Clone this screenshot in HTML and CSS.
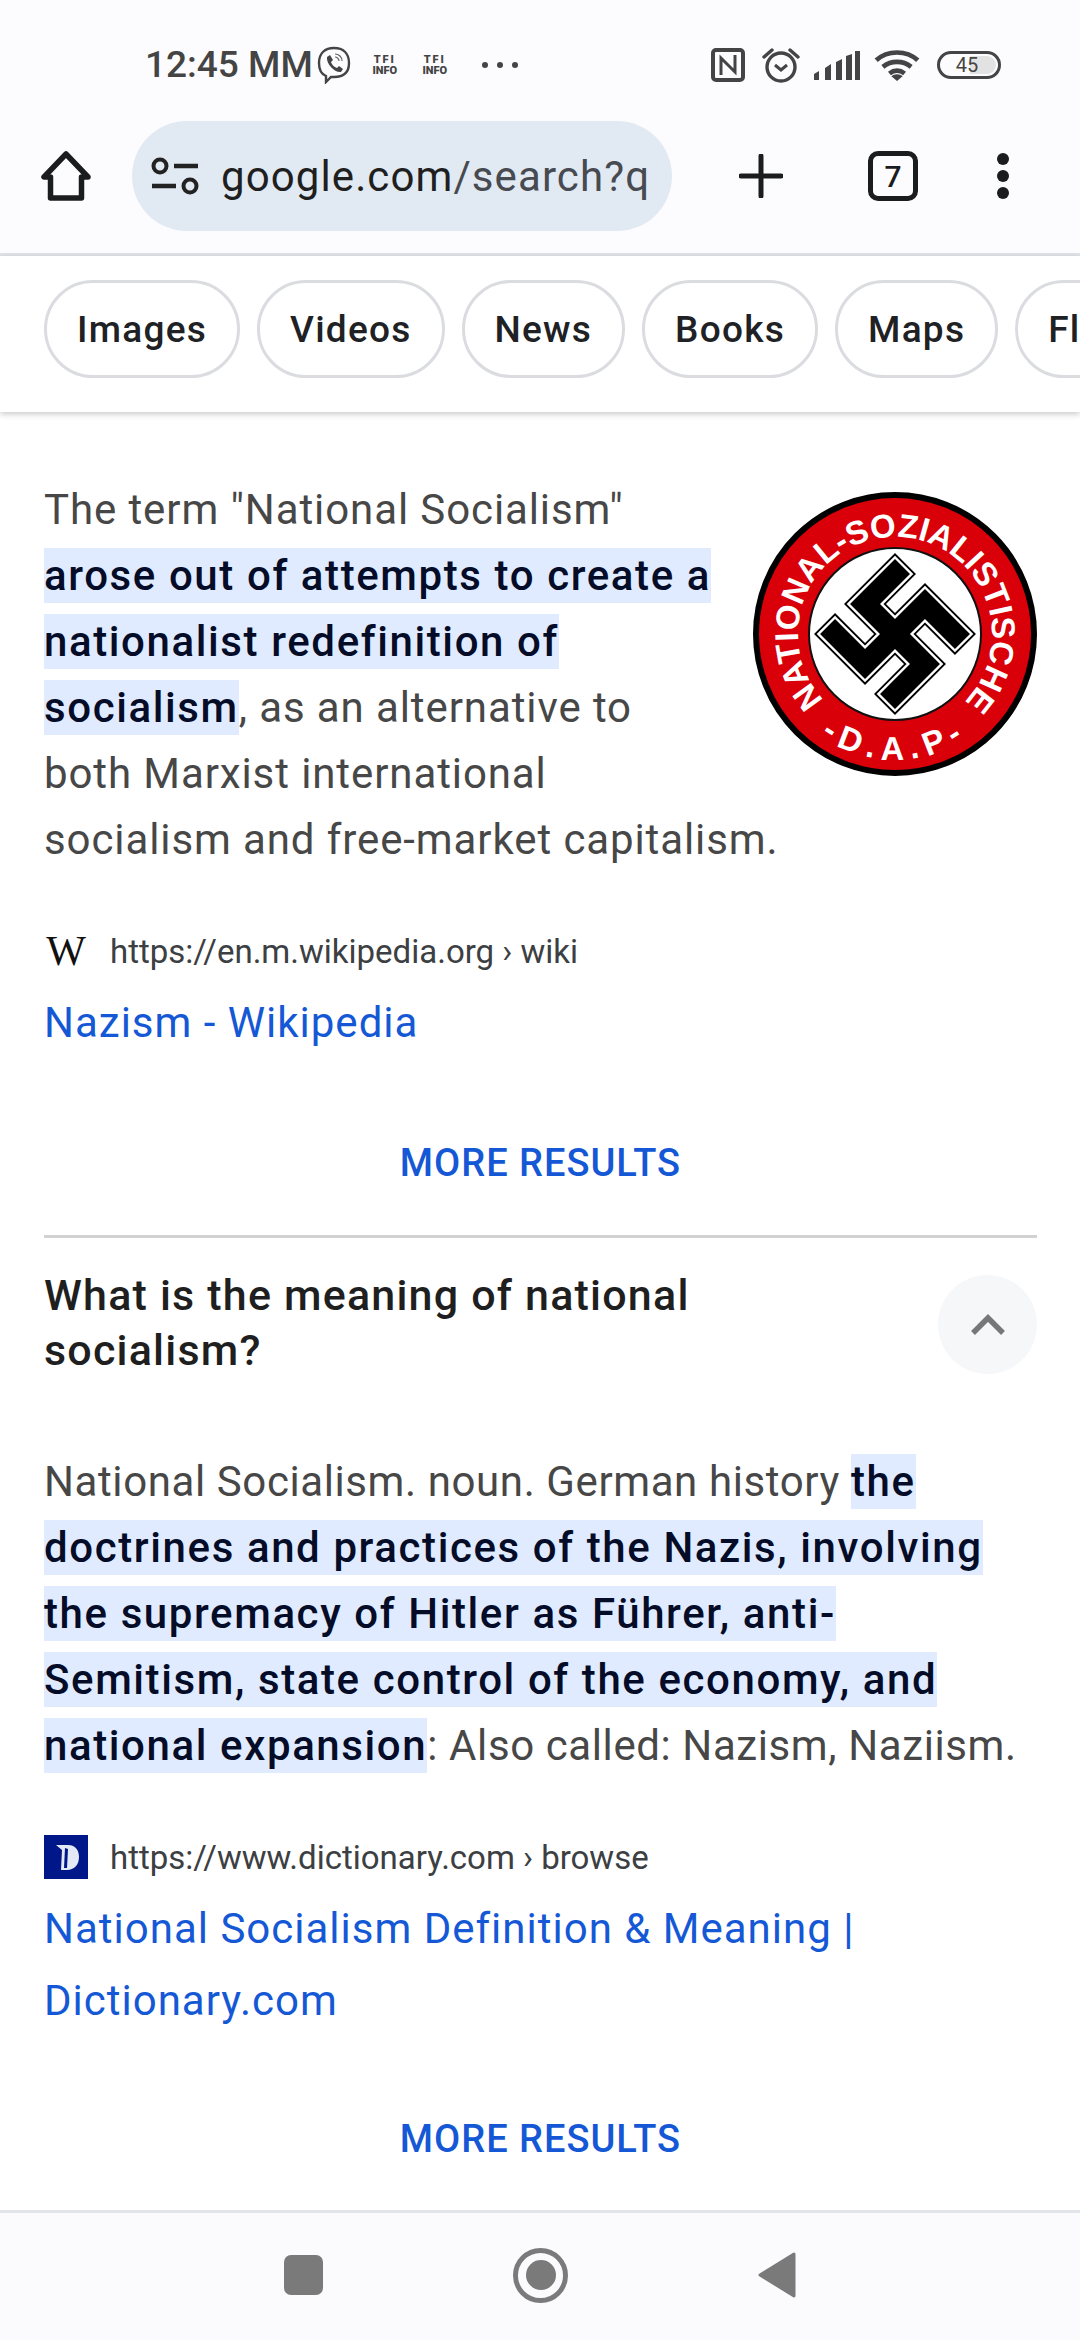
FILE: index.html
```html
<!DOCTYPE html>
<html lang="en">
<head>
<meta charset="utf-8">
<title>google.com/search</title>
<link rel="stylesheet" href="styles.css">
</head>
<body>
<div class="phone">
  <header class="chrome">
    <div class="status">
      <div class="status-left">
        <span class="time">12:45 MM</span>
        <svg class="viber" viewBox="0 0 36 38"><path d="M18 2c9 0 15 5 15 15s-6 14-15 14h-3l-5 5v-6C5 28 3 23 3 17 3 7 9 2 18 2z" fill="none" stroke="#444" stroke-width="2.4"/><path d="M11 11l3-2 3 5-2 2c1 3 3 5 6 6l2-2 4 3-2 3c-6 1-15-8-14-15z" fill="#444"/><path d="M19 8c4 0 7 3 7 7M19 11c2 0 4 2 4 4" fill="none" stroke="#666" stroke-width="1.2"/></svg>
        <span class="tfi"><b>TFI</b><b>INFO</b></span>
        <span class="tfi tfi-2"><b>TFI</b><b>INFO</b></span>
        <span class="dots"><i></i><i></i><i></i></span>
      </div>
      <div class="status-right">
        <svg class="ic-nfc" width="34" height="34" viewBox="0 0 34 34"><rect x="2" y="2" width="30" height="30" rx="3" fill="none" stroke="#444" stroke-width="4"/><path d="M10 27V10l7 7M24 7v17l-7-7" fill="none" stroke="#444" stroke-width="3"/></svg>
        <svg class="ic-alarm" width="40" height="36" viewBox="0 0 40 36"><circle cx="20" cy="20" r="14" fill="none" stroke="#444" stroke-width="3.4"/><path d="M14 18l6 5 6-5" fill="none" stroke="#444" stroke-width="3"/><path d="M3 10l8-7M37 10l-8-7" stroke="#444" stroke-width="3.4" stroke-linecap="round"/></svg>
        <svg class="ic-signal" width="48" height="32" viewBox="0 0 48 32"><path d="M1 25l5-3v9H1zM12 19l6-4v16h-6zM23 13l6-3v21h-6zM33 7l6-2v26h-6zM42 2h5v29h-5z" fill="#444"/></svg>
        <svg class="ic-wifi" width="46" height="34" viewBox="0 0 48 36"><path d="M2 13c12-11 32-11 44 0M9 20c9-7 21-7 30 0M16 27c5-4 11-4 16 0" fill="none" stroke="#444" stroke-width="5"/><path d="M24 35l-6-5c3-3 9-3 12 0z" fill="#444"/></svg>
        <span class="battery"><span class="batt-fill"></span><span class="batt-num">45</span></span>
      </div>
    </div>
    <div class="toolbar">
      <svg class="home" width="50" height="50" viewBox="0 0 50 50"><path d="M25 3L3 26h6.500v21h31V26H47z" fill="none" stroke="#1b1c1e" stroke-width="5.500" stroke-linejoin="round"/></svg>
      <div class="pill">
        <svg width="50" height="38" viewBox="0 0 50 38"><circle cx="10" cy="9" r="6.500" fill="none" stroke="#222" stroke-width="4"/><path d="M24 9h24M2 29h24" stroke="#222" stroke-width="4.500"/><circle cx="40" cy="29" r="6.500" fill="none" stroke="#222" stroke-width="4"/></svg>
        <span class="url">google.com<span class="url-dim">/search?q</span></span>
      </div>
      <svg class="plus" width="44" height="44" viewBox="0 0 44 44"><path d="M22 2v40M2 22h40" stroke="#1b1c1e" stroke-width="5" stroke-linecap="round"/></svg>
      <span class="tabs">7</span>
      <span class="menu"><i></i><i></i><i></i></span>
    </div>
  </header>

  <nav class="chips">
    <span class="chip">Images</span>
    <span class="chip">Videos</span>
    <span class="chip">News</span>
    <span class="chip">Books</span>
    <span class="chip">Maps</span>
    <span class="chip">Flights</span>
  </nav>

  <main class="content">
    <section class="answer first">
      <svg class="emblem" width="288" height="288" viewBox="-144 -144 288 288">
        <defs>
          <path id="arc-top" d="M-71 66A97 97 0 1 1 71 66"/>
          <path id="arc-bot" d="M-89 89A126 126 0 0 0 89 89"/>
        </defs>
        <circle r="139" fill="#d9000a" stroke="#000" stroke-width="6"/>
        <circle r="86" fill="#fff" stroke="#111" stroke-width="2"/>
        <circle r="82" fill="none" stroke="#fff" stroke-width="2"/>
        <text class="emblem-text"><textPath href="#arc-top" textLength="452" lengthAdjust="spacing">NATIONAL-SOZIALISTISCHE</textPath></text>
        <text class="emblem-text emblem-dap"><textPath href="#arc-bot" startOffset="50%" text-anchor="middle">-D.A.P-</textPath></text>
        <g transform="rotate(-45) scale(1.06)">
          <path d="M-10-50H50V-30H10V-10H50V50H30V10H10V50H-50V30H-10V10H-50V-50H-30V-10H-10z" fill="#000" stroke="#000" stroke-width="8"/>
          <path d="M-10-50H50V-30H10V-10H50V50H30V10H10V50H-50V30H-10V10H-50V-50H-30V-10H-10z" fill="#000" stroke="#fff" stroke-width="4.500"/>
          <path d="M-10-50H50V-30H10V-10H50V50H30V10H10V50H-50V30H-10V10H-50V-50H-30V-10H-10z" fill="#000"/>
        </g>
      </svg>
      <p class="body">The term "National Socialism" <mark>arose out of attempts to create a nationalist redefinition of socialism</mark>, as an alternative to both Marxist international socialism and free-market capitalism.</p>
      <div class="source">
        <span class="fav fav-w">W</span>
        <span class="cite">https://en.m.wikipedia.org › wiki</span>
      </div>
      <a class="title">Nazism - Wikipedia</a>
      <a class="more">MORE RESULTS</a>
    </section>

    <section class="answer">
      <div class="q-head">
        <h2 class="question">What is the meaning of national socialism?</h2>
        <span class="toggle"><svg width="34" height="22" viewBox="0 0 34 22"><path d="M2 19L17 4l15 15" fill="none" stroke="#777" stroke-width="5.500"/></svg></span>
      </div>
      <p class="body body-2">National Socialism. noun. German history <mark>the doctrines and practices of the Nazis, involving the supremacy of Hitler as Führer, anti-<br>Semitism, state control of the economy, and national expansion</mark>: Also called: Nazism, Naziism.</p>
      <div class="source">
        <svg class="fav" width="44" height="44" viewBox="0 0 44 44"><rect width="44" height="44" fill="#00178a"/><path d="M12 10h12c8 0 11 6 11 12 0 8-5 13-12 13h-6l1-20c-2-2-4-3-6-5z" fill="#e4e9f6"/><path d="M21 13l3 1-1 19h-3z" fill="#00178a"/></svg>
        <span class="cite">https://www.dictionary.com › browse</span>
      </div>
      <a class="title">National Socialism Definition &amp; Meaning | Dictionary.com</a>
      <a class="more more-2">MORE RESULTS</a>
    </section>
  </main>

  <footer class="navbar">
    <span class="nav-square"></span>
    <span class="nav-home"><i></i></span>
    <svg width="38" height="46" viewBox="0 0 38 46"><path d="M36 2L2 23l34 21z" fill="#7a7a7a" stroke="#7a7a7a" stroke-width="3" stroke-linejoin="round"/></svg>
  </footer>
</div>
</body>
</html>
```
FILE: styles.css
```css
* { box-sizing: border-box; }
html, body { margin: 0; padding: 0; }
body { font-family: Roboto, "Liberation Sans", sans-serif; background: #fff; }
.phone { width: 1080px; height: 2340px; display: flex; flex-direction: column; overflow: hidden; }

.chrome { height: 256px; background: #fcfcfe; border-bottom: 3px solid #e1e5ea; flex: none; }
.status { height: 121px; padding: 40px 0 0 145px; display: flex; justify-content: space-between; align-items: flex-start; }
.status-left { display: flex; align-items: center; height: 50px; }
.time { font-size: 37px; font-weight: 500; color: #444; line-height: 50px; }
.viber { width: 36px; height: 38px; margin-left: 3px; }
.tfi { display: flex; flex-direction: column; align-items: center; font-size: 11px; line-height: 11px; color: #444; margin-left: 20px; width: 26px; }
.tfi-2 { margin-left: 24px; }
.tfi b { font-weight: 900; }
.tfi b:first-child { letter-spacing: 2px; }
.dots { display: flex; gap: 9px; margin-left: 34px; }
.dots i { display: block; width: 6px; height: 6px; border-radius: 50%; background: #444; }
.status-right { display: flex; align-items: center; height: 50px; padding-right: 79px; }
.ic-alarm { margin-left: 16px; }
.ic-signal { margin-left: 12px; }
.ic-wifi { margin-left: 13px; }
.battery { position: relative; width: 64px; height: 28px; border: 3px solid #444; border-radius: 14px; margin-left: 17px; display: flex; align-items: center; justify-content: center; }
.batt-fill { position: absolute; right: 2px; top: 2px; bottom: 2px; width: 26px; background: #e2e2e2; border-radius: 0 10px 10px 0; }
.batt-num { position: relative; font-size: 20px; color: #444; line-height: 22px; margin-left: -4px; }

.toolbar { height: 110px; display: flex; align-items: center; padding-left: 41px; }
.home { flex: none; }
.pill { width: 540px; height: 110px; margin-left: 41px; background: #e1e9f2; border-radius: 55px; display: flex; align-items: center; gap: 21px; padding-left: 18px; flex: none; }
.url { font-size: 42px; color: #1f1f1f; letter-spacing: 1.1px; white-space: nowrap; }
.url-dim { color: #474a50; }
.plus { margin-left: 67px; flex: none; }
.tabs { width: 50px; height: 50px; border: 5px solid #1b1c1e; border-radius: 10px; margin-left: 85px; font-size: 30px; font-weight: 500; color: #1b1c1e; display: flex; align-items: center; justify-content: center; flex: none; }
.menu { display: flex; flex-direction: column; gap: 5px; margin-left: 79px; }
.menu i { display: block; width: 12px; height: 12px; border-radius: 50%; background: #1b1c1e; }

.chips { height: 156px; flex: none; display: flex; align-items: flex-start; gap: 17px; padding: 24px 0 0 44px; background: #fff; box-shadow: 0 2px 6px rgba(0,0,0,.22); position: relative; overflow: hidden; }
.chip { height: 98px; flex: none; border: 3px solid #dadce0; border-radius: 49px; padding: 0 30px; font-size: 37px; letter-spacing: 1.25px; font-weight: 500; color: #202124; display: flex; align-items: center; }

.content { flex: 1; padding: 0 43px 0 44px; background: #fff; overflow: hidden; }
.answer.first { padding-top: 65px; border-bottom: 3px solid #d2d2d2; padding-bottom: 44px; }
.emblem { float: right; margin: 13px -2px 0 30px; }
.body { margin: 0; font-size: 42px; letter-spacing: 0.9px; line-height: 66px; color: #474747; }
.body-2 { margin-top: 71px; letter-spacing: 0.6px; }
mark { background: #e0ebff; color: #040c28; font-weight: 500; letter-spacing: 1.6px; padding: 3px 0; -webkit-box-decoration-break: clone; box-decoration-break: clone; }
.source { display: flex; align-items: center; gap: 22px; margin-top: 56px; height: 44px; }
.fav { width: 44px; height: 44px; flex: none; }
.fav-w { font-family: "Liberation Serif", serif; font-size: 42px; color: #111; display: flex; align-items: center; justify-content: center; }
.cite { font-size: 33px; color: #3c4043; white-space: nowrap; }
.title { display: block; margin-top: 14px; font-size: 42px; letter-spacing: 1px; line-height: 72px; color: #1558d6; }
.more { display: block; margin-top: 76px; text-align: center; font-size: 38px; letter-spacing: 1px; font-weight: 500; line-height: 56px; color: #1558d6; }
.more-2 { margin-top: 74px; }

.q-head { display: flex; justify-content: space-between; align-items: flex-start; padding-top: 30px; }
.question { margin: 0; width: 740px; font-size: 43px; letter-spacing: 1.2px; line-height: 55px; font-weight: 500; color: #1f1f1f; }
.toggle { width: 99px; height: 99px; border-radius: 50%; background: #f6f7f9; display: flex; align-items: center; justify-content: center; flex: none; margin-top: 7px; }

.emblem-text { font-family: "Liberation Sans", Arial, sans-serif; font-weight: 700; font-size: 33px; fill: #fff; }
.emblem-dap { letter-spacing: 7px; }

.navbar { height: 130px; flex: none; background: #fbfbfe; border-top: 3px solid #e1e5ea; display: flex; align-items: center; justify-content: center; gap: 190px; padding-bottom: 3px; }
.nav-square { width: 39px; height: 40px; background: #7a7a7a; border-radius: 7px; }
.nav-home { width: 55px; height: 55px; border: 5px solid #7a7a7a; border-radius: 50%; display: flex; align-items: center; justify-content: center; }
.nav-home i { display: block; width: 30px; height: 30px; border-radius: 50%; background: #7a7a7a; }
```
